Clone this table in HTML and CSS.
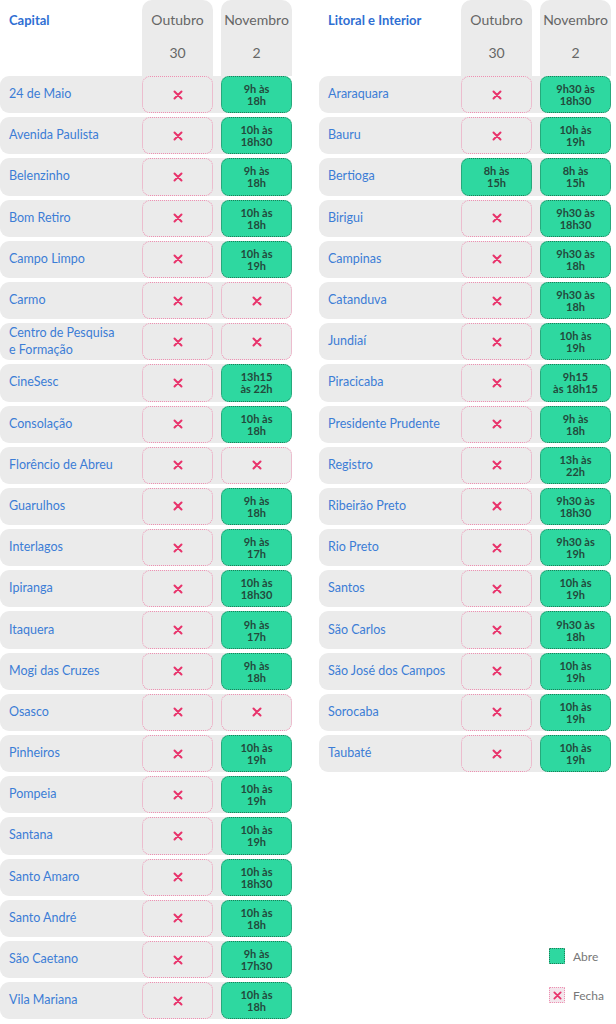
FILE: index.html
```html
<!DOCTYPE html>
<html lang="pt-BR">
<head>
<meta charset="utf-8">
<title>Horários</title>
<link rel="stylesheet" href="styles.css">
</head>
<body>
<svg width="0" height="0" class="defs">
  <symbol id="x" viewBox="0 0 10 10"><path d="M1.5 1.5 L8.5 8.5 M8.5 1.5 L1.5 8.5" stroke="#e8336b" stroke-width="2" stroke-linecap="round" fill="none"/></symbol>
</svg>
<main class="page">
  <section class="table">
    <div class="head">
      <div class="cat">Capital</div>
      <div class="hcol"><span>Outubro</span><span>30</span></div>
      <div class="hcol"><span>Novembro</span><span>2</span></div>
    </div>
    <div class="rows">
      <div class="row"><div class="name">24 de Maio</div><div class="cell closed"><svg><use href="#x"/></svg></div><div class="cell open">9h às<br>18h</div></div>
      <div class="row"><div class="name">Avenida Paulista</div><div class="cell closed"><svg><use href="#x"/></svg></div><div class="cell open">10h às<br>18h30</div></div>
      <div class="row"><div class="name">Belenzinho</div><div class="cell closed"><svg><use href="#x"/></svg></div><div class="cell open">9h às<br>18h</div></div>
      <div class="row"><div class="name">Bom Retiro</div><div class="cell closed"><svg><use href="#x"/></svg></div><div class="cell open">10h às<br>18h</div></div>
      <div class="row"><div class="name">Campo Limpo</div><div class="cell closed"><svg><use href="#x"/></svg></div><div class="cell open">10h às<br>19h</div></div>
      <div class="row"><div class="name">Carmo</div><div class="cell closed"><svg><use href="#x"/></svg></div><div class="cell closed"><svg><use href="#x"/></svg></div></div>
      <div class="row"><div class="name">Centro de Pesquisa<br>e Formação</div><div class="cell closed"><svg><use href="#x"/></svg></div><div class="cell closed"><svg><use href="#x"/></svg></div></div>
      <div class="row"><div class="name">CineSesc</div><div class="cell closed"><svg><use href="#x"/></svg></div><div class="cell open">13h15<br>às 22h</div></div>
      <div class="row"><div class="name">Consolação</div><div class="cell closed"><svg><use href="#x"/></svg></div><div class="cell open">10h às<br>18h</div></div>
      <div class="row"><div class="name">Florêncio de Abreu</div><div class="cell closed"><svg><use href="#x"/></svg></div><div class="cell closed"><svg><use href="#x"/></svg></div></div>
      <div class="row"><div class="name">Guarulhos</div><div class="cell closed"><svg><use href="#x"/></svg></div><div class="cell open">9h às<br>18h</div></div>
      <div class="row"><div class="name">Interlagos</div><div class="cell closed"><svg><use href="#x"/></svg></div><div class="cell open">9h às<br>17h</div></div>
      <div class="row"><div class="name">Ipiranga</div><div class="cell closed"><svg><use href="#x"/></svg></div><div class="cell open">10h às<br>18h30</div></div>
      <div class="row"><div class="name">Itaquera</div><div class="cell closed"><svg><use href="#x"/></svg></div><div class="cell open">9h às<br>17h</div></div>
      <div class="row"><div class="name">Mogi das Cruzes</div><div class="cell closed"><svg><use href="#x"/></svg></div><div class="cell open">9h às<br>18h</div></div>
      <div class="row"><div class="name">Osasco</div><div class="cell closed"><svg><use href="#x"/></svg></div><div class="cell closed"><svg><use href="#x"/></svg></div></div>
      <div class="row"><div class="name">Pinheiros</div><div class="cell closed"><svg><use href="#x"/></svg></div><div class="cell open">10h às<br>19h</div></div>
      <div class="row"><div class="name">Pompeia</div><div class="cell closed"><svg><use href="#x"/></svg></div><div class="cell open">10h às<br>19h</div></div>
      <div class="row"><div class="name">Santana</div><div class="cell closed"><svg><use href="#x"/></svg></div><div class="cell open">10h às<br>19h</div></div>
      <div class="row"><div class="name">Santo Amaro</div><div class="cell closed"><svg><use href="#x"/></svg></div><div class="cell open">10h às<br>18h30</div></div>
      <div class="row"><div class="name">Santo André</div><div class="cell closed"><svg><use href="#x"/></svg></div><div class="cell open">10h às<br>18h</div></div>
      <div class="row"><div class="name">São Caetano</div><div class="cell closed"><svg><use href="#x"/></svg></div><div class="cell open">9h às<br>17h30</div></div>
      <div class="row"><div class="name">Vila Mariana</div><div class="cell closed"><svg><use href="#x"/></svg></div><div class="cell open">10h às<br>18h</div></div>
    </div>
  </section>
  <section class="table right">
    <div class="head">
      <div class="cat">Litoral e Interior</div>
      <div class="hcol"><span>Outubro</span><span>30</span></div>
      <div class="hcol"><span>Novembro</span><span>2</span></div>
    </div>
    <div class="rows">
      <div class="row"><div class="name">Araraquara</div><div class="cell closed"><svg><use href="#x"/></svg></div><div class="cell open">9h30 às<br>18h30</div></div>
      <div class="row"><div class="name">Bauru</div><div class="cell closed"><svg><use href="#x"/></svg></div><div class="cell open">10h às<br>19h</div></div>
      <div class="row"><div class="name">Bertioga</div><div class="cell open">8h às<br>15h</div><div class="cell open">8h às<br>15h</div></div>
      <div class="row"><div class="name">Birigui</div><div class="cell closed"><svg><use href="#x"/></svg></div><div class="cell open">9h30 às<br>18h30</div></div>
      <div class="row"><div class="name">Campinas</div><div class="cell closed"><svg><use href="#x"/></svg></div><div class="cell open">9h30 às<br>18h</div></div>
      <div class="row"><div class="name">Catanduva</div><div class="cell closed"><svg><use href="#x"/></svg></div><div class="cell open">9h30 às<br>18h</div></div>
      <div class="row"><div class="name">Jundiaí</div><div class="cell closed"><svg><use href="#x"/></svg></div><div class="cell open">10h às<br>19h</div></div>
      <div class="row"><div class="name">Piracicaba</div><div class="cell closed"><svg><use href="#x"/></svg></div><div class="cell open">9h15<br>às 18h15</div></div>
      <div class="row"><div class="name">Presidente Prudente</div><div class="cell closed"><svg><use href="#x"/></svg></div><div class="cell open">9h às<br>18h</div></div>
      <div class="row"><div class="name">Registro</div><div class="cell closed"><svg><use href="#x"/></svg></div><div class="cell open">13h às<br>22h</div></div>
      <div class="row"><div class="name">Ribeirão Preto</div><div class="cell closed"><svg><use href="#x"/></svg></div><div class="cell open">9h30 às<br>18h30</div></div>
      <div class="row"><div class="name">Rio Preto</div><div class="cell closed"><svg><use href="#x"/></svg></div><div class="cell open">9h30 às<br>19h</div></div>
      <div class="row"><div class="name">Santos</div><div class="cell closed"><svg><use href="#x"/></svg></div><div class="cell open">10h às<br>19h</div></div>
      <div class="row"><div class="name">São Carlos</div><div class="cell closed"><svg><use href="#x"/></svg></div><div class="cell open">9h30 às<br>18h</div></div>
      <div class="row"><div class="name">São José dos Campos</div><div class="cell closed"><svg><use href="#x"/></svg></div><div class="cell open">10h às<br>19h</div></div>
      <div class="row"><div class="name">Sorocaba</div><div class="cell closed"><svg><use href="#x"/></svg></div><div class="cell open">10h às<br>19h</div></div>
      <div class="row"><div class="name">Taubaté</div><div class="cell closed"><svg><use href="#x"/></svg></div><div class="cell open">10h às<br>19h</div></div>
    </div>
    <div class="legend">
      <div class="leg-item"><span class="swatch open"></span><span>Abre</span></div>
      <div class="leg-item"><span class="swatch closed"><svg><use href="#x"/></svg></span><span>Fecha</span></div>
    </div>
  </section>
</main>
</body>
</html>
```

FILE: styles.css
```css
* { box-sizing: border-box; }
html, body { margin: 0; padding: 0; background: #fff; }
body {
  font-family: "Lato", "Noto Sans", "DejaVu Sans", sans-serif;
  width: 616px;
}
.defs { position: absolute; width: 0; height: 0; }
.page {
  display: flex;
  gap: 27px;
  align-items: stretch;
}
.table {
  width: 292px;
  display: flex;
  flex-direction: column;
}
.head {
  display: flex;
  gap: 8px;
  height: 76px;
}
.cat {
  width: 134px;
  padding: 12px 0 0 9px;
  font-size: 13px;
  font-weight: 700;
  color: #2f6fd3;
}
.hcol {
  width: 71px;
  background: #ebebeb;
  border-radius: 10px 10px 0 0;
  display: flex;
  flex-direction: column;
  align-items: center;
  color: #666;
  font-size: 14px;
}
.hcol span:first-child { margin-top: 11px; }
.hcol span:last-child { margin-top: 16px; }
.rows {
  display: flex;
  flex-direction: column;
  gap: 4px;
}
.row {
  display: flex;
  gap: 8px;
  height: 37.2px;
  background: #ebebeb;
  border-radius: 9px;
}
.name {
  width: 134px;
  padding-left: 9px;
  padding-bottom: 2px;
  display: flex;
  align-items: center;
  font-size: 12.5px;
  line-height: 17px;
  color: #3c7dd6;
}
.cell {
  width: 71px;
  height: 100%;
  border-radius: 8px;
  display: flex;
  align-items: center;
  justify-content: center;
  text-align: center;
}
.cell svg { width: 10px; height: 10px; }
.closed {
  border: 1px dotted #ee8fb1;
  background: #ebebeb;
}
.open {
  background: #2ed8a0;
  border: 1px dotted #1f7b58;
  color: #234a3c;
  font-size: 11px;
  font-weight: 700;
  line-height: 12px;
  padding-top: 1px;
}
.legend {
  margin-top: auto;
  margin-bottom: 16px;
  margin-left: 230px;
  display: flex;
  flex-direction: column;
  gap: 23px;
}
.leg-item {
  display: flex;
  align-items: center;
  gap: 8px;
  font-size: 12px;
  color: #777;
}
.swatch {
  width: 16px;
  height: 16px;
  display: flex;
  align-items: center;
  justify-content: center;
  border-radius: 1px;
}
.swatch.closed { background: #f3e6ec; }
.swatch svg { width: 9px; height: 9px; }
```
